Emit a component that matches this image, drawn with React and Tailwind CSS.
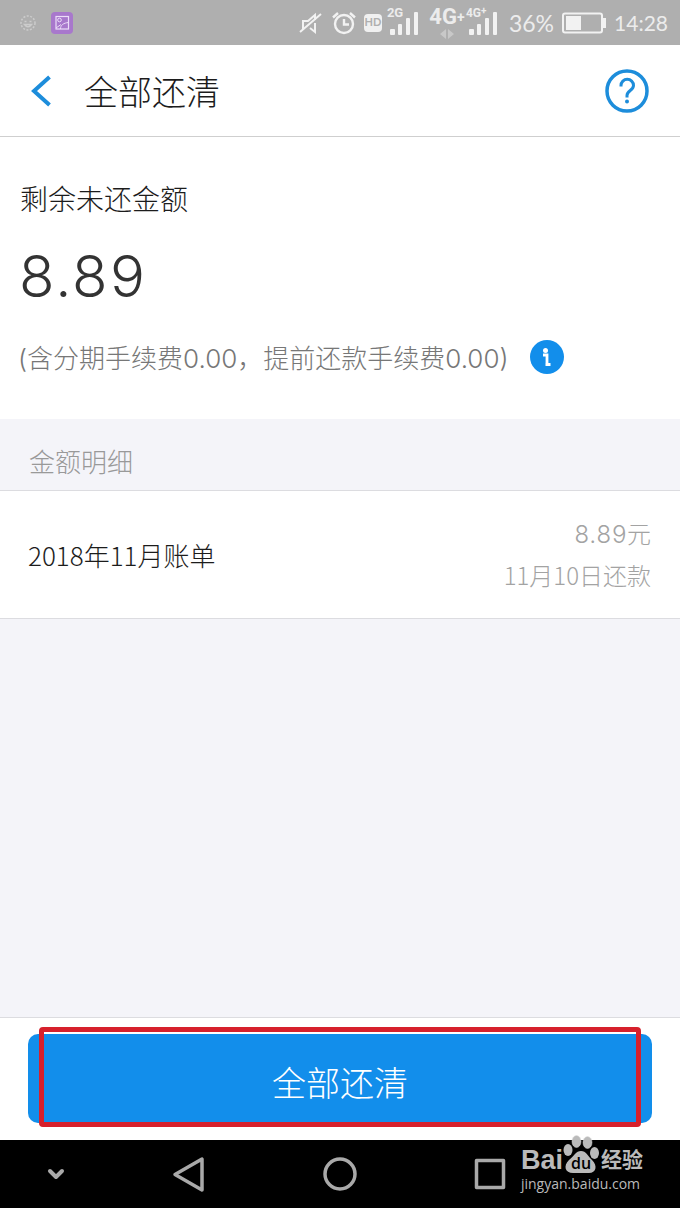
function SignalBars({ className }) {
  return (
    <svg className={className} viewBox="0 0 28 24" fill="#f2f2f2" aria-hidden="true">
      <rect x="0" y="18" width="5" height="6" rx="1" />
      <rect x="8" y="13" width="4" height="11" rx="1" />
      <rect x="16" y="7" width="4" height="17" rx="1" />
      <rect x="24" y="1" width="4" height="23" rx="1" />
    </svg>
  );
}

function StatusBar() {
  return (
    <div className="flex h-[45px] items-center bg-[#afafaf] pl-[18px] pr-[12px] font-normal text-[#ececec] font-['Lato',sans-serif]">
      <svg className="h-5 w-5" viewBox="0 0 20 20" fill="none" stroke="#cccccc" strokeWidth="1.5" aria-hidden="true">
        <circle cx="10" cy="10" r="7" strokeDasharray="2 1.5" />
        <path d="M6.5 8.5h2M11.5 8.5h2M6.5 11.5q3.5 4.5 7 0z" />
      </svg>
      <svg className="ml-[13px] h-[22px] w-[22px]" viewBox="0 0 22 22" fill="none" aria-hidden="true">
        <rect width="22" height="22" rx="4" fill="#a878cc" />
        <rect x="5" y="4.5" width="12.5" height="12.5" stroke="#ecdcf8" strokeWidth="1.2" />
        <circle cx="8.5" cy="8" r="1.8" stroke="#ecdcf8" />
        <path d="M9.500 17c0-4 3-6 8-6.500M5 16l5-3.500" stroke="#ecdcf8" />
      </svg>

      <div className="ml-auto flex items-center">
        <svg className="h-6 w-6" viewBox="0 0 24 24" fill="none" stroke="#f2f2f2" strokeWidth="2" aria-hidden="true">
          <path d="M1 21 22 3M4 18V10h5l7-6v5M16 12v9l-5-4" />
        </svg>
        <svg className="ml-[9px] h-6 w-6" viewBox="0 0 24 24" fill="none" stroke="#f2f2f2" strokeWidth="2.4" aria-hidden="true">
          <circle cx="12" cy="13" r="9" />
          <path d="M12 8v5.5h5M1 6.5 6 2M23 6.5 18 2" />
        </svg>
        <span className="ml-[8px] flex h-[18px] w-[18px] items-center justify-center rounded-sm bg-[#f0f0f0] text-[11px] font-bold text-[#afafaf]">HD</span>
        <span className="relative ml-2 h-8 w-7">
          <span className="absolute -left-[3px] -top-[2px] text-[13px] leading-4 font-bold font-['Roboto',sans-serif]">2G</span>
          <SignalBars className="mt-[4px] h-6 w-7" />
        </span>
        <span className="ml-3 flex h-9 w-[34px] flex-col items-center">
          <span className="flex text-[22px] leading-6 font-bold font-['Roboto',sans-serif]">4G<span className="text-[14px] leading-6">+</span></span>
          <svg className="h-[10px] w-[14px]" viewBox="0 0 14 10" fill="#c8c8c8" aria-hidden="true">
            <path d="M6 0v10L0 5zM8 0v10l6-5z" />
          </svg>
        </span>
        <span className="relative ml-[5px] h-8 w-7">
          <span className="absolute -left-[3px] -top-[2px] flex text-[12px] leading-4 font-bold font-['Roboto',sans-serif]">4G<span className="text-[10px] leading-3">+</span></span>
          <SignalBars className="mt-[4px] h-6 w-7" />
        </span>
        <span className="ml-[12px] text-[23px] leading-6">36%</span>
        <svg className="ml-[8px] h-[22px] w-[44px]" viewBox="0 0 44 22" fill="none" aria-hidden="true">
          <rect x="1" y="1.5" width="39" height="19" rx="2" stroke="#f2f2f2" strokeWidth="2" />
          <rect x="4" y="4" width="15" height="14" fill="#f2f2f2" />
          <rect x="41" y="6" width="3" height="10" fill="#f2f2f2" />
        </svg>
        <span className="ml-[8px] text-[21px] leading-6">14:28</span>
      </div>
    </div>
  );
}

function Header() {
  return (
    <header className="flex h-[92px] items-center border-b border-[#cfcfcf] bg-white pl-[30px] pr-[31px]">
      <button aria-label="返回">
        <svg className="h-8 w-[22px]" viewBox="0 0 22 32" fill="none" stroke="#1d8ddb" strokeWidth="4" aria-hidden="true">
          <path d="M19.5 2 4 16l15.5 14" />
        </svg>
      </button>
      <h1 className="ml-8 pt-1 text-[34px] leading-10 text-[#1c1c1c]">全部还清</h1>
      <button className="ml-auto" aria-label="帮助">
        <svg className="h-[44px] w-[44px]" viewBox="0 0 44 44" fill="none" stroke="#1d8ddb" aria-hidden="true">
          <circle cx="22" cy="22" r="20" strokeWidth="3.5" />
          <path d="M16 17.5v-1a6 6 0 0 1 12.5 0c0 5-6.5 5-6.5 10v2" strokeWidth="3" />
          <circle cx="22" cy="32.5" r="2" fill="#1d8ddb" stroke="none" />
        </svg>
      </button>
    </header>
  );
}

function Summary() {
  return (
    <section className="h-[282px] bg-white px-[18px] pt-[43px]">
      <h2 className="pl-[2px] text-[28px] leading-10 text-[#1c1c1c]">剩余未还金额</h2>
      <p className="mt-6 text-[58px] leading-[64px] text-[#333333] tabular-nums">8.89</p>
      <div className="mt-[27px] flex items-center">
        <p className="whitespace-nowrap pt-1 text-[26px] leading-10 text-[#777777]">(含分期手续费0.00，提前还款手续费0.00)</p>
        <button className="ml-auto mr-[98px] shrink-0" aria-label="费用说明">
          <svg className="h-[34px] w-[34px]" viewBox="0 0 34 34" aria-hidden="true">
            <circle cx="17" cy="17" r="17" fill="#128eeb" />
            <circle cx="15.5" cy="10.5" r="2.5" fill="#ffffff" />
            <path d="M13 15h4v10M15.5 24.5h5" fill="none" stroke="#ffffff" strokeWidth="2.8" />
          </svg>
        </button>
      </div>
    </section>
  );
}

function BillRow({ title, amount, date }) {
  return (
    <li className="flex h-[128px] items-center justify-between border-b border-[#dcdce0] bg-white pl-7 pr-[29px] font-['Noto_Sans_CJK_SC',sans-serif]">
      <span className="text-[26px] leading-10 text-[#1c1c1c]">{title}</span>
      <span className="flex flex-col items-end text-[24px] leading-10 text-[#a3a3a3]">
        <span className="tabular-nums font-['Inter','Noto_Sans_CJK_SC',sans-serif]">{amount}元</span>
        <span>{date}</span>
      </span>
    </li>
  );
}

function NavBar() {
  return (
    <nav className="relative flex h-[68px] items-center bg-black pl-[46px] text-[#a9a9a9]">
      <button aria-label="收起">
        <svg className="h-5 w-5" viewBox="0 0 20 20" fill="none" stroke="currentColor" strokeWidth="4" strokeLinecap="round" strokeLinejoin="round" aria-hidden="true">
          <path d="m4 7 6 6 6-6" />
        </svg>
      </button>
      <button className="ml-[106px]" aria-label="后退">
        <svg className="h-9 w-9" viewBox="0 0 36 36" fill="none" stroke="currentColor" strokeWidth="3.5" strokeLinejoin="round" aria-hidden="true">
          <path d="M30 3v31L3 18.5z" />
        </svg>
      </button>
      <button className="ml-[114px]" aria-label="主页">
        <svg className="h-9 w-9" viewBox="0 0 36 36" fill="none" stroke="currentColor" strokeWidth="3.5" aria-hidden="true">
          <circle cx="18" cy="18" r="15" />
        </svg>
      </button>
      <button className="ml-[114px]" aria-label="最近任务">
        <svg className="h-9 w-9" viewBox="0 0 36 36" fill="none" stroke="currentColor" strokeWidth="3.5" strokeLinejoin="round" aria-hidden="true">
          <rect x="4.5" y="4.5" width="27" height="27" />
        </svg>
      </button>
      <Watermark />
    </nav>
  );
}

function Watermark() {
  return (
    <div className="absolute -top-[5px] right-[37px] text-[#bababa]">
      <div className="flex h-[39px] items-end">
        <span className="text-[27px] leading-7 font-bold font-['Liberation_Sans',sans-serif]">Bai</span>
        <svg className="h-[39px] w-9" viewBox="0 0 36 39" fill="currentColor" aria-hidden="true">
          <ellipse cx="5" cy="15" rx="4.5" ry="6" />
          <ellipse cx="13.5" cy="6.5" rx="4.5" ry="6" stroke="#dddddd" strokeWidth=".5" />
          <ellipse cx="24.5" cy="7.5" rx="4.5" ry="6" stroke="#dddddd" strokeWidth=".5" />
          <ellipse cx="31.5" cy="18" rx="4.5" ry="6" />
          <path d="M18 16c5 0 7 5 11 9 6 6 4 13-3 13H10C2 38 0 31 6 25c5-4 7-9 12-9z" />
          <text x="18" y="34" textAnchor="middle" fill="#000000" fontSize="16" fontWeight="600" fontFamily="Open Sans, sans-serif">du</text>
        </svg>
        <span className="ml-[2px] text-[21px] leading-7 font-bold">经验</span>
      </div>
      <div className="text-[14px] leading-5 font-normal font-['Open_Sans',sans-serif]">jingyan.baidu.com</div>
    </div>
  );
}

const bills = [{ title: "2018年11月账单", amount: "8.89", date: "11月10日还款" }];

export default function App() {
  return (
    <div className="flex min-h-screen flex-col bg-[#f4f4f9] font-light font-['Inter','Noto_Sans_CJK_SC',sans-serif]">
      <StatusBar />
      <Header />
      <main className="flex flex-1 flex-col">
        <Summary />
        <h2 className="h-[72px] border-b border-[#dcdce0] px-[29px] pt-[24px] text-[26px] leading-10 text-[#999999]">金额明细</h2>
        <ul>
          {bills.map(bill => (
            <BillRow key={bill.title} {...bill} />
          ))}
        </ul>
      </main>
      <footer className="border-t border-[#dcdce0] bg-white px-[28px] pt-4 pb-[17px]">
        <div className="relative">
          <button className="block h-[89px] w-full rounded-[10px] bg-[#128eeb] pt-[10px] text-[34px] leading-10 text-white">全部还清</button>
          <div className="pointer-events-none absolute -top-[7px] -bottom-[4px] left-[11px] right-[11px] rounded-[4px] border-5 border-[#d6202c]" />
        </div>
      </footer>
      <NavBar />
    </div>
  );
}
